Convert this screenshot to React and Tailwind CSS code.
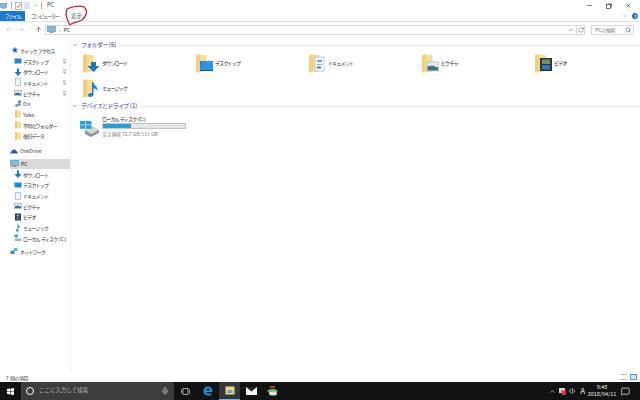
import React from "react";
import { ArrowLeft, ArrowRight, ArrowUp, ChevronDown, ChevronUp, Mic, RotateCw, Search, X, Minus, Pin, Volume1, MessageSquare, Star } from "lucide-react";

// kana runs get squeezed, latin runs (spaces, brackets, numbers) keep their own width
function Jp({ text, tight = "tracking-[-0.8px]" }) {
  return text.split(/([\x00-\x7f]+)/).map((part, i) =>
    i % 2 ? <span key={i} className="whitespace-pre tracking-normal">{part}</span> : <span key={i} className={tight}>{part}</span>
  );
}

function Overlay({ kind }) {
  if (kind === "download") return <path d="M8 8 H13 V12 H16.5 L10.5 18 L4.5 12 H8 Z" fill="#1a78c8" />;
  if (kind === "desktop") return (
    <>
      <rect x="4" y="7" width="13" height="10" fill="#1e88d8" />
      <path d="M4 17 L7 7 H17 V17 Z" fill="#2a96e4" />
      <rect x="4" y="16" width="13" height="1" fill="#0c5ea8" />
    </>
  );
  if (kind === "document") return (
    <>
      <rect x="6" y="3" width="9" height="14" fill="#f2f6fa" stroke="#9fb2c4" strokeWidth="0.6" />
      <rect x="8" y="6" width="5" height="2" fill="#6aa3d0" />
      <rect x="8" y="10" width="5" height="1" fill="#9fb2c4" />
      <rect x="8" y="12.5" width="4" height="2" fill="#5a7f9f" />
    </>
  );
  if (kind === "picture") return (
    <>
      <rect x="5" y="8" width="11.5" height="9" fill="#dfeaf2" stroke="#8a98a6" strokeWidth="0.5" />
      <path d="M5.5 12.5 L10 11.5 L16 13.5 V16.5 H5.5 Z" fill="#3f6f86" />
    </>
  );
  if (kind === "video") return (
    <>
      <rect x="5" y="4" width="12" height="13" fill="#2c3440" />
      <rect x="7" y="5.5" width="8" height="4.5" fill="#7a8f5f" />
      <rect x="7" y="11" width="8" height="4.5" fill="#2f78c4" />
    </>
  );
  return <path d="M9 3 H10.2 C11 7 15.5 7.5 14.5 12 C13.7 10 12 9.5 10.5 9.5 V15.5 C10.5 18 5.5 19 5 16.5 C4.7 14.8 7.5 13.5 9 14.2 Z" fill="#1c82d4" />;
}

function FolderIcon({ kind }) {
  return (
    <svg width="19" height="19" viewBox="0 0 19 19" className="shrink-0">
      <path d="M0 1 H10.5 V17 L3 18.5 H0 Z" fill="#f8de92" />
      <path d="M0 1 L4 0 V16.5 L0 18.5 Z" fill="#efd083" />
      <Overlay kind={kind} />
    </svg>
  );
}

function PcIcon({ w = 9, h = 7 }) {
  return (
    <svg width={w} height={h} viewBox="0 0 9 7" className="shrink-0">
      <rect x="0" y="0" width="9" height="5.5" fill="#7fb8e4" stroke="#6a8194" strokeWidth="0.5" />
      <rect x="2.5" y="5.5" width="4" height="1.5" fill="#8c99a4" />
    </svg>
  );
}

function SideIcon({ kind }) {
  return (
    <svg width="8" height="8" viewBox="0 0 8 8" className="shrink-0">
      {kind === "desktop" && <rect x="0.5" y="1.5" width="7" height="5" fill="#1e88d8" />}
      {kind === "download" && <path d="M3 0.5 H5 V4 H7.5 L4 8 L0.5 4 H3 Z" fill="#1a78c8" />}
      {kind === "document" && <rect x="1.5" y="0.5" width="5" height="7" fill="#f5f8fb" stroke="#8fa2b3" strokeWidth="0.6" />}
      {kind === "picture" && (
        <>
          <rect x="0.5" y="1.5" width="7" height="5" fill="#dfeaf2" stroke="#74838f" strokeWidth="0.5" />
          <path d="M1 4.5 L4 3.5 L7 5 V6 H1 Z" fill="#3f6f86" />
        </>
      )}
      {kind === "video" && (
        <>
          <rect x="1" y="0.5" width="6" height="7" fill="#2c3440" />
          <rect x="2.5" y="1.5" width="3" height="2" fill="#8f9f8f" />
          <rect x="2.5" y="4.5" width="3" height="2" fill="#5f86ac" />
        </>
      )}
      {kind === "music" && <path d="M3.5 0.5 H4.4 C4.7 2 6.5 2.5 6 4 C5.5 3.3 5 3 4.4 3 V6.5 C4.4 7.8 1.8 8 1.8 6.7 C1.8 5.8 3 5.3 3.5 5.6 Z" fill="#1c82d4" />}
      {kind === "drive" && (
        <>
          <rect x="0.5" y="0.5" width="3.5" height="3" fill="#2aa5dc" />
          <path d="M1 4.5 H7.5 V7 H1 Z" fill="#a8b0b6" />
        </>
      )}
      {kind === "disk" && (
        <>
          <path d="M0.5 5 L6 3 L7.5 5 L2 7 Z" fill="#87909a" />
          <rect x="4" y="0.5" width="3" height="2.5" fill="#2aa5dc" />
        </>
      )}
      {kind === "folder" && (
        <>
          <rect x="1" y="0.5" width="6" height="7" fill="#fbe08f" />
          <rect x="1" y="0.5" width="2" height="7" fill="#e8c877" />
        </>
      )}
      {kind === "cloud" && <path d="M0.5 6.5 C0 5 1 4 2 4 C2.5 2 5.5 2 6 4 C7.3 4 8 5.5 7.5 6.5 Z" fill="#1a5fa8" />}
      {kind === "network" && (
        <>
          <rect x="0.5" y="3.5" width="4" height="3.5" fill="#2f8fd0" />
          <rect x="4" y="1" width="3.5" height="3" fill="#5fb0e4" />
        </>
      )}
    </svg>
  );
}

function NavRow({ kind, label, pin }) {
  return (
    <div className="flex h-[10.7px] items-center pl-[4px]">
      <SideIcon kind={kind} />
      <span className="ml-[1px] whitespace-nowrap leading-none text-[#333]"><Jp text={label} /></span>
      {pin && <Pin size={5} className="ml-auto mr-[3px] text-[#777]" strokeWidth={2} />}
    </div>
  );
}

function Sidebar() {
  const quick = [
    ["desktop", "デスクトップ", true],
    ["download", "ダウンロード", true],
    ["document", "ドキュメント", true],
    ["picture", "ピクチャ", true],
    ["disk", "D:#"],
    ["folder", "Yuko"],
    ["folder", "不明なフォルダー"],
    ["folder", "復旧データ"],
  ];
  const pc = [
    ["download", "ダウンロード"],
    ["desktop", "デスクトップ"],
    ["document", "ドキュメント"],
    ["picture", "ピクチャ"],
    ["video", "ビデオ"],
    ["music", "ミュージック"],
    ["drive", "ローカル ディスク (C:)"],
  ];
  return (
    <aside className="flex w-[71px] shrink-0 flex-col border-r border-[#efefef] pt-[8px] pl-[10px] text-[5px]">
      <div className="flex h-[10.7px] items-center pl-[2px]">
        <Star size={6} className="text-[#1f6fb8]" fill="#1f6fb8" />
        <span className="ml-[2px] whitespace-nowrap leading-none text-[#333]"><Jp text="クイック アクセス" /></span>
      </div>
      {quick.map(([k, t, p]) => (
        <NavRow key={t} kind={k} label={t} pin={p} />
      ))}
      <div className="mt-[4px] flex h-[10.7px] items-center">
        <SideIcon kind="cloud" />
        <span className="ml-[2px] leading-none text-[#333]">OneDrive</span>
      </div>
      <div className="mt-[3px] flex h-[10px] items-center bg-[#d9d9d9]">
        <PcIcon />
        <span className="ml-[2px] leading-none text-[#222]">PC</span>
      </div>
      {pc.map(([k, t]) => (
        <NavRow key={t} kind={k} label={t} />
      ))}
      <div className="mt-[2px] flex h-[10.7px] items-center">
        <SideIcon kind="network" />
        <span className="ml-[2px] leading-none text-[#333]"><Jp text="ネットワーク" /></span>
      </div>
    </aside>
  );
}

function SectionHeader({ label }) {
  return (
    <div className="flex h-[10px] items-center">
      <ChevronDown size={6} className="text-[#555]" />
      <span className="ml-[3px] whitespace-nowrap text-[6px] leading-none text-[#1e3287]"><Jp text={label} tight="tracking-[-0.7px]" /></span>
      <div className="ml-[3px] h-px flex-1 bg-[#e3e6ec]" />
    </div>
  );
}

function Tile({ kind, label }) {
  return (
    <div className="flex h-[25px] items-center">
      <FolderIcon kind={kind} />
      <span className="-mt-[2px] text-[5px] leading-none tracking-[-0.8px] text-[#222]">{label}</span>
    </div>
  );
}

function Content() {
  const folders = [
    ["download", "ダウンロード"],
    ["desktop", "デスクトップ"],
    ["document", "ドキュメント"],
    ["picture", "ピクチャ"],
    ["video", "ビデオ"],
    ["music", "ミュージック"],
  ];
  return (
    <main className="flex-1 pl-[1px] pr-[5px] pt-[3px]">
      <SectionHeader label="フォルダー (6)" />
      <div className="grid grid-cols-[repeat(5,113px)] pl-[11px] pt-[1px]">
        {folders.map(([k, t]) => (
          <Tile key={k} kind={k} label={t} />
        ))}
      </div>
      <SectionHeader label="デバイスとドライブ (1)" />
      <div className="flex items-end pl-[7px] pt-[4px]">
        <svg width="20" height="16" viewBox="0 0 20 16" className="shrink-0">
          <path d="M6 9 L13 5 L20 9 V12 L12 16 L6 13 Z" fill="#8f969c" />
          <path d="M6 9 L13 5 L20 9 L12 13 Z" fill="#d5d8db" />
          <rect x="1" y="0" width="5.5" height="3.6" fill="#26a0da" />
          <rect x="7" y="0" width="5.5" height="3.6" fill="#26a0da" />
          <rect x="1" y="4.2" width="5.5" height="3.6" fill="#26a0da" />
          <rect x="7" y="4.2" width="5.5" height="3.6" fill="#26a0da" />
        </svg>
        <div className="ml-[3px] w-[84px]">
          <div className="whitespace-nowrap text-[5px] leading-[7px] text-[#222]"><Jp text="ローカル ディスク (C:)" /></div>
          <div className="my-[1px] h-[6px] w-full border border-[#c4c4c4] bg-[#e6e6e6]">
            <div className="h-full w-[34%] bg-[#26a0da]" />
          </div>
          <div className="whitespace-nowrap text-[5px] leading-[7px] text-[#777]"><Jp text="空き領域 72.7 GB/111 GB" tight="tracking-[-0.3px]" /></div>
        </div>
      </div>
    </main>
  );
}

function TitleBar() {
  return (
    <div className="flex h-[11px] items-center text-[5.5px] text-[#333]">
      <PcIcon w={7} h={6} />
      <div className="ml-[4px] h-[7px] w-px bg-[#aaa]" />
      <svg width="7" height="8" viewBox="0 0 7 8" className="ml-[3px]">
        <rect x="0.5" y="0.5" width="6" height="7" fill="#fff" stroke="#8a8a8a" strokeWidth="0.6" />
        <path d="M2 4 L3 5.5 L5.5 2" fill="none" stroke="#d0523a" strokeWidth="0.8" />
      </svg>
      <svg width="6" height="7" viewBox="0 0 6 7" className="ml-[2px]">
        <rect x="0" y="0" width="6" height="7" fill="#d8e4f2" />
      </svg>
      <ChevronDown size={5} className="ml-[3px] text-[#333]" />
      <div className="ml-[3px] h-[7px] w-px bg-[#aaa]" />
      <span className="ml-[5px] leading-none">PC</span>
      <div className="ml-auto flex items-center pr-[8px] text-[#222]">
        <Minus size={7} />
        <svg width="6" height="6" viewBox="0 0 6 6" className="ml-[13px]">
          <rect x="0.5" y="1.5" width="4" height="4" fill="none" stroke="#333" strokeWidth="0.7" />
          <path d="M2 1 H5.5 V4" fill="none" stroke="#333" strokeWidth="0.7" />
        </svg>
        <X size={7} className="ml-[13px]" />
      </div>
    </div>
  );
}

function TabBar() {
  return (
    <div className="flex h-[11px] items-stretch border-b border-[#e0e0e0] text-[5px] tracking-[-1px]">
      <div className="flex w-[25px] items-center justify-center bg-[#1979ca] text-white">ファイル</div>
      <div className="ml-[6px] flex w-[40px] items-center text-[#555]">コンピューター</div>
      <div className="flex items-center text-[5.5px] tracking-normal text-[#555]">表示</div>
      <div className="ml-auto flex items-center pr-[2px]">
        <ChevronDown size={6} className="text-[#888]" />
        <span className="ml-[4px] flex h-[6px] w-[6px] items-center justify-center rounded-full bg-[#1979ca] text-[4px] font-bold leading-none text-white">?</span>
      </div>
    </div>
  );
}

function AddressBar() {
  return (
    <div className="flex h-[15px] items-center pl-[5px] text-[5px]">
      <ArrowLeft size={7} className="text-[#c4c4c4]" />
      <ArrowRight size={7} className="ml-[6px] text-[#c4c4c4]" />
      <ChevronDown size={5} className="ml-[2px] text-[#c4c4c4]" />
      <ArrowUp size={7} className="ml-[3px] text-[#444]" />
      <div className="ml-[3px] flex h-[10px] w-[540px] items-center border border-[#d9d9d9] pl-[1px]">
        <PcIcon />
        <span className="ml-[3px] text-[#666]">›</span>
        <span className="ml-[3px] leading-none text-[#333]">PC</span>
        <ChevronDown size={6} className="ml-auto text-[#555]" />
        <div className="ml-[2px] flex h-full w-[8px] items-center justify-center border-l border-[#d9d9d9]">
          <RotateCw size={6} className="text-[#555]" />
        </div>
      </div>
      <div className="ml-[6px] flex h-[10px] w-[43px] items-center border border-[#d9d9d9] pl-[3px] text-[#777]">
        <span className="leading-none"><Jp text="PCの検索" tight="tracking-[-0.4px]" /></span>
        <Search size={6} className="ml-auto mr-[2px] text-[#444]" />
      </div>
    </div>
  );
}

function StatusBar() {
  return (
    <div className="flex h-[10px] items-center pl-[6px] text-[5px] text-[#444]">
      <span className="leading-none"><Jp text="7 個の項目" tight="tracking-[-0.5px]" /></span>
      <div className="ml-auto flex items-center gap-[3px] pr-[3px]">
        <div className="h-[6px] w-[7px] border-y border-[#bbb]" />
        <div className="h-[6px] w-[7px] border border-[#5a93c4] bg-[#cfe3f3]" />
      </div>
    </div>
  );
}

function Taskbar() {
  return (
    <div className="flex h-[18px] items-stretch bg-[#101214] text-[5.5px] text-[#ddd]">
      <div className="flex w-[21px] items-center justify-center">
        <svg width="7" height="7" viewBox="0 0 7 7">
          <path d="M0 1 L3 0.5 V3.2 H0 Z M3.5 0.4 L7 0 V3.2 H3.5 Z M0 3.7 H3 V6.5 L0 6 Z M3.5 3.7 H7 V7 L3.5 6.6 Z" fill="#fff" />
        </svg>
      </div>
      <div className="flex w-[153px] items-center bg-[#3d3d3d] pl-[5px]">
        <div className="h-[8px] w-[8px] rounded-full border border-white" />
        <span className="ml-[5px] leading-none text-[#b5b5b5]">ここに入力して検索</span>
        <Mic size={8} className="ml-auto mr-[5px] text-[#ccc]" />
      </div>
      <div className="flex w-[22px] items-center justify-center">
        <svg width="9" height="7" viewBox="0 0 9 7">
          <rect x="2" y="0.5" width="5" height="6" fill="none" stroke="#ddd" strokeWidth="0.7" />
          <path d="M0.5 1.5 V5.5 M8.5 1.5 V5.5" stroke="#ddd" strokeWidth="0.7" />
        </svg>
      </div>
      <div className="flex w-[23px] items-center justify-center">
        <svg width="10" height="10" viewBox="0 0 10 10">
          <path d="M0.5 5 C0.5 2 2.5 0.5 5 0.5 C8 0.5 9.5 2.5 9.5 6 H3 C3 8 6 8.5 8.5 7 V9 C5 10.5 0.5 9.5 0.5 5 Z M3 4.2 H7 C7 2 3.3 2 3 4.2 Z" fill="#1a8fe0" />
        </svg>
      </div>
      <div className="flex w-[21px] items-center justify-center border-b border-[#7cb4dc] bg-[#33373b]">
        <svg width="10" height="9" viewBox="0 0 10 9">
          <rect x="0.5" y="0.5" width="9" height="8" fill="#f6d77f" />
          <rect x="2.5" y="4" width="5" height="3" fill="#5aa4dc" />
        </svg>
      </div>
      <div className="flex w-[22px] items-center justify-center">
        <svg width="11" height="8" viewBox="0 0 11 8">
          <rect x="0" y="0" width="11" height="8" fill="#f2f2f2" />
          <path d="M0 0 L5.5 4.5 L11 0 Z" fill="#222" />
        </svg>
      </div>
      <div className="flex w-[20px] items-center justify-center">
        <svg width="11" height="10" viewBox="0 0 11 10">
          <rect x="3" y="0" width="5" height="2" fill="#c8352c" />
          <ellipse cx="5.5" cy="5" rx="5" ry="2" fill="#6cbb5a" />
          <ellipse cx="6" cy="7.5" rx="4" ry="2" fill="#e2e2e2" />
        </svg>
      </div>
      <div className="ml-auto flex items-center pr-[10px]">
        <ChevronUp size={7} className="text-[#eee]" />
        <svg width="7" height="7" viewBox="0 0 7 7" className="ml-[3px]">
          <rect x="0" y="0" width="6" height="5" fill="#d5d5d5" />
          <rect x="2.5" y="2.5" width="4.5" height="4.5" fill="#d8343a" />
        </svg>
        <Volume1 size={8} className="ml-[3px] text-[#ddd]" />
        <span className="ml-[3px] text-[8px] leading-none text-[#eee]">A</span>
        <div className="ml-[4px] flex w-[26px] flex-col items-center text-[5.5px] leading-[7px] text-[#eee]">
          <span>9:48</span>
          <span className="whitespace-nowrap">2018/04/11</span>
        </div>
        <MessageSquare size={9} className="ml-[6px] text-[#eee]" />
      </div>
    </div>
  );
}

export default function App() {
  return (
    <div className="relative flex h-[400px] w-[640px] flex-col overflow-hidden bg-white font-['Noto_Sans_CJK_JP',sans-serif]">
      <TitleBar />
      <TabBar />
      <AddressBar />
      <div className="flex flex-1">
        <Sidebar />
        <Content />
      </div>
      <StatusBar />
      <Taskbar />
      {/* red hand-drawn circle around the 表示 tab */}
      <svg width="24" height="22" viewBox="0 0 24 22" className="absolute left-[65px] top-[5px]">
        <path d="M2 4 C6 2 14 0 19 2 C23 5 22 11 17 15 C12 18 7 17 5 20 C2 15 0 9 2 4 Z" fill="none" stroke="#c8141e" strokeWidth="1.2" />
      </svg>
    </div>
  );
}
